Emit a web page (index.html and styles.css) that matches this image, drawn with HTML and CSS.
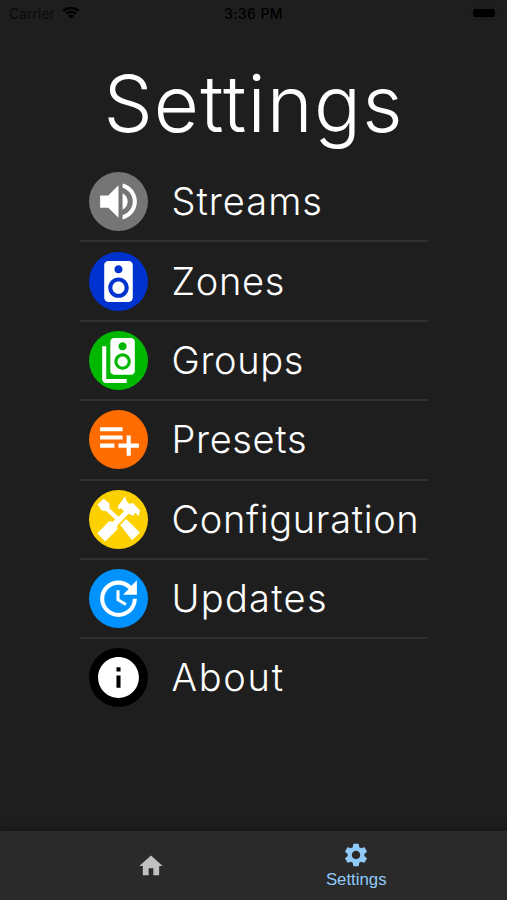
FILE: index.html
```html
<!DOCTYPE html>
<html lang="en">
<head>
    <meta charset="UTF-8">
    <meta name="viewport" content="width=device-width, initial-scale=1.0">
    <title>Settings</title>
    <link rel="stylesheet" href="styles.css">
</head>
<body>
    <div class="status-bar">
        <div class="carrier">
            <span>Carrier</span>
            <svg class="wifi" viewBox="0 0 18 13">
                <path d="M0.5 4.2a12.2 12.2 0 0 1 17 0l-1.7 1.7a9.8 9.8 0 0 0-13.6 0z"/>
                <path d="M3.3 7a8.2 8.2 0 0 1 11.4 0l-1.7 1.7a5.8 5.8 0 0 0-8 0z"/>
                <path d="M6.1 9.8a4.2 4.2 0 0 1 5.8 0L9 12.7z"/>
            </svg>
        </div>
        <div class="time">3:36 PM</div>
        <div class="battery"><div class="battery-level"></div></div>
    </div>

    <main class="page">
        <h1 class="title">Settings</h1>
        <ul class="menu">
            <li class="menu-item">
                <span class="icon streams"><svg viewBox="0 0 24 24"><path d="M3 9v6h4l5 5V4L7 9H3zm13.5 3c0-1.77-1.02-3.29-2.5-4.03v8.05c1.48-.73 2.5-2.25 2.5-4.02zM14 3.23v2.06c2.89.86 5 3.54 5 6.71s-2.11 5.85-5 6.71v2.06c4.01-.91 7-4.49 7-8.77s-2.99-7.86-7-8.77z"/></svg></span>
                <span class="label label-streams">Streams</span>
            </li>
            <li class="menu-item">
                <span class="icon zones"><svg viewBox="0 0 24 24"><path d="M17 2H7c-1.1 0-2 .9-2 1.99v16c0 1.1.9 2 2 2h10c1.1 0 2-.9 2-2V4c0-1.1-.9-2-2-2zm-5 2c1.1 0 2 .9 2 2s-.9 2-2 2c-1.11 0-2-.9-2-2s.89-2 2-2zm0 16c-2.76 0-5-2.24-5-5s2.24-5 5-5 5 2.24 5 5-2.24 5-5 5zm0-8c-1.66 0-3 1.34-3 3s1.34 3 3 3 3-1.34 3-3-1.34-3-3-3z"/></svg></span>
                <span class="label label-zones">Zones</span>
            </li>
            <li class="menu-item">
                <span class="icon groups"><svg viewBox="0 0 24 24"><path d="M18.2 1H9.8C8.81 1 8 1.81 8 2.8v14.4c0 .99.81 1.79 1.8 1.79l8.4.01c.99 0 1.8-.81 1.8-1.8V2.8c0-.99-.81-1.8-1.8-1.8zM14 3c1.1 0 2 .89 2 2s-.9 2-2 2-2-.89-2-2 .9-2 2-2zm0 13.5c-2.21 0-4-1.79-4-4s1.79-4 4-4 4 1.79 4 4-1.79 4-4 4z"/><circle cx="14" cy="12.5" r="2.5"/><path d="M6 5H4v16c0 1.1.89 2 2 2h10v-2H6V5z"/></svg></span>
                <span class="label label-groups">Groups</span>
            </li>
            <li class="menu-item">
                <span class="icon presets"><svg viewBox="0 0 24 24"><path d="M14 10H3v2h11v-2zm0-4H3v2h11V6zm4 8v-4h-2v4h-4v2h4v4h2v-4h4v-2h-4zM3 16h7v-2H3v2z"/></svg></span>
                <span class="label label-presets">Presets</span>
            </li>
            <li class="menu-item">
                <span class="icon configuration"><svg viewBox="0 0 24 24"><path d="M1.7 4.6 4.7 1.8l2.8 2.2.1 2.5 4.4 4.2 2.7-2.7-1.5-1.5-1.1.6-.5-1.5L15.3.6l.7 2.5 1.3 1.2 1.8-.4L22.500 7.500l-.5 2.900-1.900-1.700-.8 1.600-2.300-1.100-5.600 5.700.1 1.900-6 6L1.600 18.700l5.800-5.800 2 .1 1-1L6.100 7.900l-2.300-.3zM12.800 14.700l2.900-2.900 6.800 6.600-3.800 3.800z"/></svg></span>
                <span class="label label-configuration">Configuration</span>
            </li>
            <li class="menu-item">
                <span class="icon updates"><svg viewBox="0 0 24 24"><path d="M21 10.12h-6.78l2.74-2.82c-2.73-2.7-7.15-2.8-9.88-.1-2.73 2.71-2.73 7.08 0 9.79s7.15 2.71 9.88 0C18.32 15.65 19 14.08 19 12.1h2c0 1.98-.88 4.55-2.64 6.29-3.51 3.48-9.21 3.48-12.72 0-3.5-3.47-3.53-9.11-.02-12.58s9.14-3.47 12.65 0L21 3v7.12zM12.5 8v4.25l3.5 2.08-.72 1.21L11 13V8h1.5z"/></svg></span>
                <span class="label label-updates">Updates</span>
            </li>
            <li class="menu-item">
                <span class="icon about"><svg viewBox="0 0 24 24"><path d="M12 2C6.48 2 2 6.48 2 12s4.48 10 10 10 10-4.48 10-10S17.52 2 12 2zm1 15h-2v-6h2v6zm0-8h-2V7h2v2z"/></svg></span>
                <span class="label label-about">About</span>
            </li>
        </ul>
    </main>

    <nav class="bottom-nav">
        <a class="nav-item">
            <svg viewBox="0 0 24 24"><path d="M10 20v-6h4v6h5v-8h3L12 3 2 12h3v8z"/></svg>
        </a>
        <a class="nav-item active">
            <svg viewBox="0 0 24 24"><path d="M19.14 12.94c.04-.3.06-.61.06-.94 0-.32-.02-.64-.07-.94l2.03-1.58c.18-.14.23-.41.12-.61l-1.92-3.32c-.12-.22-.37-.29-.59-.22l-2.39.96c-.5-.38-1.03-.7-1.62-.94l-.36-2.54c-.04-.24-.24-.41-.48-.41h-3.84c-.24 0-.43.17-.47.41l-.36 2.54c-.59.24-1.13.57-1.62.94l-2.39-.96c-.22-.08-.47 0-.59.22L2.74 8.87c-.12.21-.08.47.12.61l2.03 1.58c-.05.3-.09.63-.09.94s.02.64.07.94l-2.03 1.58c-.18.14-.23.41-.12.61l1.92 3.32c.12.22.37.29.59.22l2.39-.96c.5.38 1.03.7 1.62.94l.36 2.54c.05.24.24.41.48.41h3.84c.24 0 .44-.17.47-.41l.36-2.54c.59-.24 1.13-.56 1.62-.94l2.39.96c.22.08.47 0 .59-.22l1.92-3.32c.12-.22.07-.47-.12-.61l-2.01-1.58zM12 15.6c-1.98 0-3.6-1.62-3.6-3.6s1.62-3.6 3.6-3.6 3.6 1.62 3.6 3.6-1.62 3.6-3.6 3.6z"/></svg>
            <span>Settings</span>
        </a>
    </nav>
</body>
</html>
```
FILE: styles.css
```css
* {
    box-sizing: border-box;
}
body {
    margin: 0;
    height: 900px;
    display: flex;
    flex-direction: column;
    overflow: hidden;
    background-color: #1e1e1e;
    color: #fff;
    font-family: Inter, sans-serif;
}
.status-bar {
    height: 28px;
    padding: 0 9px;
    display: grid;
    grid-template-columns: 1fr auto 1fr;
    color: #000;
    font: 14px/28px Inter, sans-serif;
}
.carrier {
    display: flex;
    align-items: center;
    gap: 7px;
    color: #090909;
}
.wifi {
    width: 18px;
    height: 13px;
    margin-bottom: 3px;
}
.time {
    font-weight: 500;
    letter-spacing: 0.4px;
}
.battery {
    justify-self: end;
    align-self: center;
    width: 28px;
    height: 14px;
    margin-bottom: 2px;
    padding: 2px;
    border: 1px solid #1a1a1a;
    border-radius: 4px;
}
.battery-level {
    height: 8px;
    border-radius: 2px;
    background-color: #000;
}
.page {
    flex: 1;
}
.title {
    margin: 28px 0 11px;
    text-align: center;
    font-size: 78px;
    line-height: 96px;
    font-weight: 300;
    letter-spacing: 1.2px;
}
.menu {
    width: 348px;
    margin: 0 auto;
    padding: 0;
    list-style: none;
}
.menu-item {
    height: 79.4px;
    padding-left: 9px;
    display: flex;
    align-items: center;
    gap: 24px;
    border-bottom: 2px solid #303030;
}
.menu-item:last-child {
    height: 77px;
    border-bottom: none;
}
.icon {
    width: 59px;
    height: 59px;
    flex: none;
    display: flex;
    align-items: center;
    justify-content: center;
    border-radius: 50%;
}
.icon svg {
    width: 49px;
    height: 49px;
    fill: #fff;
}
.streams {
    background-color: #757575;
}
.zones {
    background-color: #0032cf;
}
.groups {
    background-color: #00b800;
}
.presets {
    background-color: #ff6c00;
}
.configuration {
    background-color: #fdd000;
}
.updates {
    background-color: #0093ff;
}
.about {
    background-color: #000;
}
.label {
    font-size: 38px;
    line-height: 48px;
    margin-top: -1px;
    font-weight: 300;
    letter-spacing: 0.65px;
    white-space: nowrap;
}
.label-streams {
    letter-spacing: 1px;
}
.label-updates {
    letter-spacing: 1.3px;
}
.label-about {
    letter-spacing: 1.7px;
}
.bottom-nav {
    height: 69px;
    padding: 0 48px;
    display: grid;
    grid-template-columns: 1fr 1fr;
    background-color: #2a2a2a;
    box-shadow: 0 -2px 12px rgba(0, 0, 0, 0.3);
}
.nav-item {
    display: flex;
    flex-direction: column;
    align-items: center;
    justify-content: center;
    font: 16.8px/22px "Liberation Sans", sans-serif;
    color: #c0c0c0;
}
.nav-item svg {
    width: 28px;
    height: 28px;
    fill: currentColor;
}
.nav-item.active {
    padding-top: 1px;
    color: #90caf9;
}
```
